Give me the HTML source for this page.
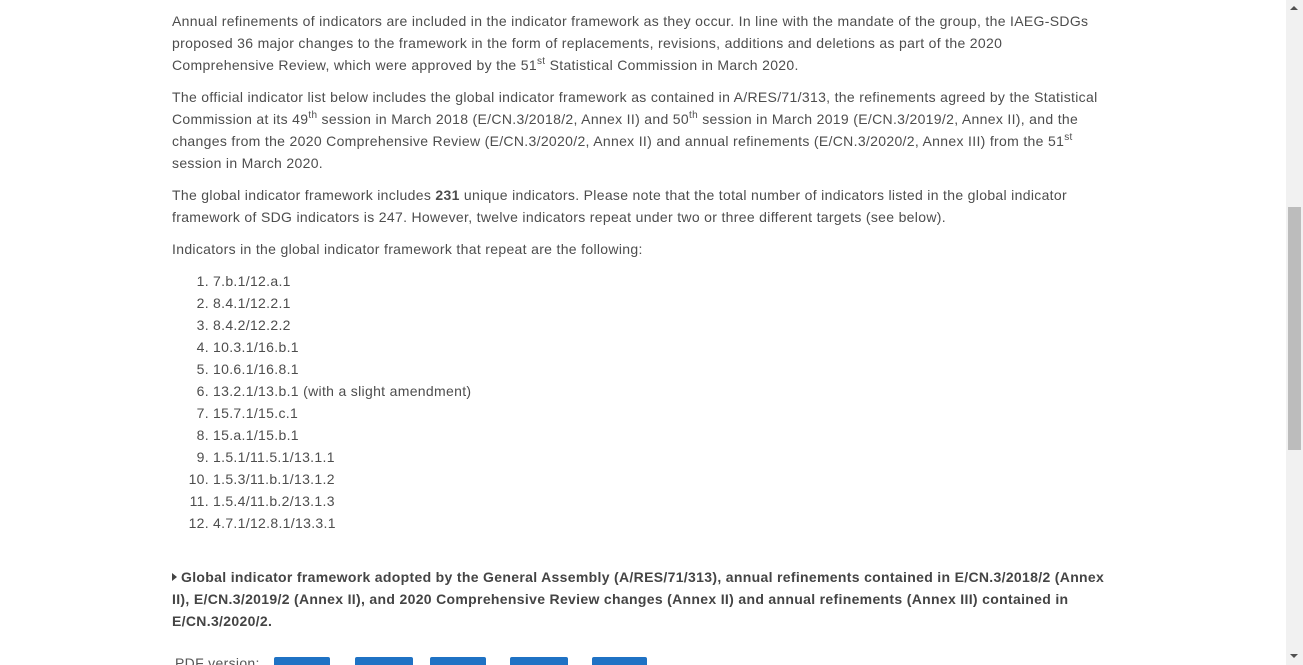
<!DOCTYPE html>
<html><head><meta charset="utf-8"><style>
html,body{margin:0;padding:0;background:#fff;overflow:hidden}
body{width:1303px;height:665px;position:relative;font-family:"Liberation Sans",sans-serif;font-size:14px;color:#4d4d4d;letter-spacing:0.32px}
.c{position:absolute;left:172px;top:10px;width:1000px;line-height:22px}
p{margin:0 0 10px 0;white-space:nowrap}
sup{font-size:10px;line-height:0;vertical-align:6px}
ol{margin:0;padding:0;list-style:none}
ol li{white-space:nowrap}
ol li span{display:inline-block;width:36px;text-align:right;margin-left:1px;margin-right:4px}
.h{position:absolute;left:172px;top:566px;font-weight:bold;line-height:22px;white-space:nowrap;color:#444}
.tri{display:inline-block;width:0;height:0;border-left:5px solid #444;border-top:4px solid transparent;border-bottom:4px solid transparent;margin-right:4px;vertical-align:1px}
.pdf{position:absolute;left:175px;top:655px;color:#555}
.b{position:absolute;top:657px;height:20px;background:#1f72c4;border-radius:2px}
.sb{position:absolute;left:1286px;top:0;width:17px;height:665px;background:#f1f1f1}
.th{position:absolute;left:1288px;top:207px;width:13px;height:243px;background:#bcbcbc}
</style></head><body>
<div class="c">
<p>Annual refinements of indicators are included in the indicator framework as they occur. In line with the mandate of the group, the IAEG-SDGs<br>proposed 36 major changes to the framework in the form of replacements, revisions, additions and deletions as part of the 2020<br>Comprehensive Review, which were approved by the 51<sup>st</sup> Statistical Commission in March 2020.</p>
<p>The official indicator list below includes the global indicator framework as contained in A/RES/71/313, the refinements agreed by the Statistical<br>Commission at its 49<sup>th</sup> session in March 2018 (E/CN.3/2018/2, Annex II) and 50<sup>th</sup> session in March 2019 (E/CN.3/2019/2, Annex II), and the<br>changes from the 2020 Comprehensive Review (E/CN.3/2020/2, Annex II) and annual refinements (E/CN.3/2020/2, Annex III) from the 51<sup>st</sup><br>session in March 2020.</p>
<p>The global indicator framework includes <b>231</b> unique indicators. Please note that the total number of indicators listed in the global indicator<br>framework of SDG indicators is 247. However, twelve indicators repeat under two or three different targets (see below).</p>
<p>Indicators in the global indicator framework that repeat are the following:</p>
<ol>
<li><span>1.</span>7.b.1/12.a.1</li>
<li><span>2.</span>8.4.1/12.2.1</li>
<li><span>3.</span>8.4.2/12.2.2</li>
<li><span>4.</span>10.3.1/16.b.1</li>
<li><span>5.</span>10.6.1/16.8.1</li>
<li><span>6.</span>13.2.1/13.b.1 (with a slight amendment)</li>
<li><span>7.</span>15.7.1/15.c.1</li>
<li><span>8.</span>15.a.1/15.b.1</li>
<li><span>9.</span>1.5.1/11.5.1/13.1.1</li>
<li><span>10.</span>1.5.3/11.b.1/13.1.2</li>
<li><span>11.</span>1.5.4/11.b.2/13.1.3</li>
<li><span>12.</span>4.7.1/12.8.1/13.3.1</li>
</ol>
</div>
<div class="h"><span class="tri"></span>Global indicator framework adopted by the General Assembly (A/RES/71/313), annual refinements contained in E/CN.3/2018/2 (Annex<br>II), E/CN.3/2019/2 (Annex II), and 2020 Comprehensive Review changes (Annex II) and annual refinements (Annex III) contained in<br>E/CN.3/2020/2.</div>
<div class="pdf">PDF version:</div>
<div class="b" style="left:274px;width:56px"></div>
<div class="b" style="left:355px;width:58px"></div>
<div class="b" style="left:430px;width:56px"></div>
<div class="b" style="left:510px;width:58px"></div>
<div class="b" style="left:592px;width:55px"></div>
<div class="sb"></div>
<div class="th"></div>
<div style="position:absolute;left:1290px;top:6px;width:0;height:0;border-left:4px solid transparent;border-right:4px solid transparent;border-bottom:4px solid #505050"></div>
<div style="position:absolute;left:1290px;top:654px;width:0;height:0;border-left:4px solid transparent;border-right:4px solid transparent;border-top:4px solid #505050"></div>
</body></html>
